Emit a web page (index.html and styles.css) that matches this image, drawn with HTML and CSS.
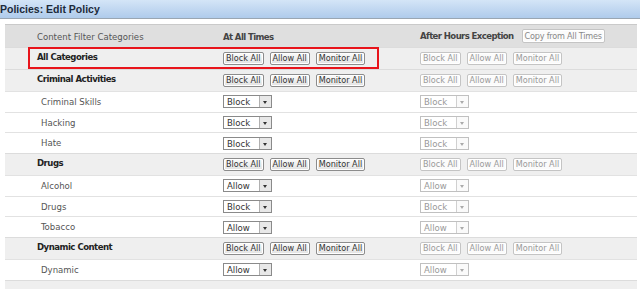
FILE: index.html
```html
<!DOCTYPE html>
<html lang="en">
<head>
    <meta charset="utf-8" />
    <title>Policies: Edit Policy</title>
    <link rel="stylesheet" href="styles.css">
</head>
<body>

  <div class="titlebar">Policies: Edit Policy</div>

  <div class="panel">
    <!-- marca roja sobre la fila "All Categories" -->
    <div class="mark"></div>

    <table class="grid">
      <colgroup>
        <col class="c-name" />
        <col class="c-all" />
        <col class="c-after" />
      </colgroup>
      <tr class="head">
        <td class="name">Content Filter Categories</td>
        <td><b>At All Times</b></td>
        <td><b>After Hours Exception</b><span class="btn off copy">Copy from All Times</span></td>
      </tr>

      <tr class="group">
        <td class="name">All Categories</td>
        <td><span class="btn">Block All</span><span class="btn">Allow All</span><span class="btn">Monitor All</span></td>
        <td><span class="btn off">Block All</span><span class="btn off">Allow All</span><span class="btn off">Monitor All</span></td>
      </tr>

      <tr class="group">
        <td class="name">Criminal Activities</td>
        <td><span class="btn">Block All</span><span class="btn">Allow All</span><span class="btn">Monitor All</span></td>
        <td><span class="btn off">Block All</span><span class="btn off">Allow All</span><span class="btn off">Monitor All</span></td>
      </tr>
      <tr class="item">
        <td class="name">Criminal Skills</td>
        <td><span class="pick">Block<i></i></span></td>
        <td><span class="pick off">Block<i></i></span></td>
      </tr>
      <tr class="item">
        <td class="name">Hacking</td>
        <td><span class="pick">Block<i></i></span></td>
        <td><span class="pick off">Block<i></i></span></td>
      </tr>
      <tr class="item">
        <td class="name">Hate</td>
        <td><span class="pick">Block<i></i></span></td>
        <td><span class="pick off">Block<i></i></span></td>
      </tr>

      <tr class="group">
        <td class="name">Drugs</td>
        <td><span class="btn">Block All</span><span class="btn">Allow All</span><span class="btn">Monitor All</span></td>
        <td><span class="btn off">Block All</span><span class="btn off">Allow All</span><span class="btn off">Monitor All</span></td>
      </tr>
      <tr class="item">
        <td class="name">Alcohol</td>
        <td><span class="pick">Allow<i></i></span></td>
        <td><span class="pick off">Allow<i></i></span></td>
      </tr>
      <tr class="item">
        <td class="name">Drugs</td>
        <td><span class="pick">Block<i></i></span></td>
        <td><span class="pick off">Block<i></i></span></td>
      </tr>
      <tr class="item">
        <td class="name">Tobacco</td>
        <td><span class="pick">Allow<i></i></span></td>
        <td><span class="pick off">Allow<i></i></span></td>
      </tr>

      <tr class="group">
        <td class="name">Dynamic Content</td>
        <td><span class="btn">Block All</span><span class="btn">Allow All</span><span class="btn">Monitor All</span></td>
        <td><span class="btn off">Block All</span><span class="btn off">Allow All</span><span class="btn off">Monitor All</span></td>
      </tr>
      <tr class="item">
        <td class="name">Dynamic</td>
        <td><span class="pick">Allow<i></i></span></td>
        <td><span class="pick off">Allow<i></i></span></td>
      </tr>

      <tr class="group">
        <td class="name"></td>
        <td></td>
        <td></td>
      </tr>
    </table>
  </div>

</body>
</html>
```

FILE: styles.css
```css
body {
    margin: 0;
    font-family: "DejaVu Sans Condensed", "DejaVu Sans", Tahoma, sans-serif;
    font-stretch: condensed;
    font-size: 9.5px;
    color: #444;
    background: #fff;
    overflow: hidden;
}
.titlebar {
    height: 18px;
    line-height: 18px;
    font-family: "Liberation Sans", Arial, sans-serif;
    font-stretch: normal;
    font-size: 10.5px;
    font-weight: bold;
    color: #1c2a3a;
    background: linear-gradient(#d4e5f7, #afcbeb);
    border-bottom: 1px solid #9aa6b2;
}
.panel {
    position: relative;
    margin: 5px 3px 0 5px;
}
.mark {
    position: absolute;
    left: 23px; top: 23px;
    width: 347px; height: 18px;
    border: 2px solid #e8141b;
    pointer-events: none;
}
.grid {
    width: 100%;
    border-collapse: collapse;
    table-layout: fixed;
}
.c-name { width: 215px; }
.c-all { width: 197px; }
.grid td {
    padding: 0 0 0 3px;
    white-space: nowrap;
    vertical-align: middle;
}
.grid td.name { padding-left: 32px; }
.head td {
    height: 22px;
    background: #dfdfdf;
    border-top: 1px solid #cacaca;
    color: #555;
}
.head b { color: #444; letter-spacing: -0.6px; }
.group td {
    height: 21px;
    background: #efefef;
    border-top: 1px solid #dcdcdc;
}
.group td.name {
    vertical-align: top;
    padding-top: 3px;
    height: 18px;
    line-height: 11px;
    font-weight: bold;
    color: #222;
    letter-spacing: -0.5px;
}
.item td {
    height: 19.7px;
    background: #fff;
    border-top: 1px solid #e2e2e2;
}
.item td.name {
    vertical-align: top;
    padding: 4px 0 0 36px;
    height: 15.7px;
    line-height: 11px;
    color: #555;
}

.btn {
    display: inline-block;
    height: 11px;
    line-height: 11px;
    padding: 0 2px;
    margin-right: 6px;
    font-size: 9px;
    color: #333;
    background: linear-gradient(#fbfbfb, #e2e2e2);
    border: 1px solid #8c8c8c;
    border-radius: 2px;
    box-shadow: inset 0 0 0 1px #fff;
}
.btn.off {
    color: #9a9a9a;
    background: #fbfbfb;
    border-color: #c4c4c4;
}
.btn.copy {
    height: 12px;
    line-height: 12px;
    margin-left: 8px;
    letter-spacing: -0.2px;
    color: #888;
}

.pick {
    display: inline-block;
    position: relative;
    width: 44px;
    height: 11px;
    line-height: 11px;
    padding-left: 3px;
    color: #333;
    background: #fff;
    border: 1px solid #8a8a8a;
}
.pick i {
    position: absolute;
    right: 0; top: 0;
    width: 11px; height: 11px;
    background: #e8e8e8;
    border-left: 1px solid #b0b0b0;
}
.pick i::after {
    content: "";
    position: absolute;
    left: 3px; top: 5px;
    border: 2.5px solid transparent;
    border-top: 3px solid #333;
    border-bottom: 0;
}
.pick.off { color: #999; border-color: #c0c0c0; }
.pick.off i { background: #fafafa; border-left-color: #d0d0d0; }
.pick.off i::after { border-top-color: #aaa; }
```
